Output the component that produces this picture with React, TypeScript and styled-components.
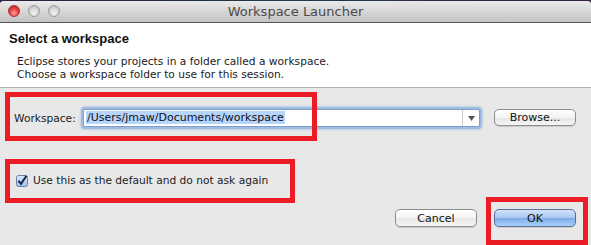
import React from "react";
import styled, { createGlobalStyle } from "styled-components";

const GlobalStyle = createGlobalStyle`
  html, body {
    margin: 0;
    padding: 0;
    background: #1d1b2e;
    overflow: hidden;
  }
  body {
    font-family: "DejaVu Sans", "Liberation Sans", sans-serif;
  }
`;

const Desktop = styled.div`
  width: 591px;
  height: 245px;
  padding-top: 1px;
  box-sizing: border-box;
  background: linear-gradient(90deg, #2a2140 0%, #1f3a48 50%, #352048 100%);
`;

const Window = styled.div`
  position: relative;
  width: 591px;
  height: 244px;
  display: flex;
  flex-direction: column;
  background: #e8e8e8;
  border-radius: 4px 4px 0 0;
  overflow: hidden;
`;

const TitleBar = styled.div`
  position: relative;
  height: 21px;
  display: flex;
  align-items: center;
  justify-content: center;
  background: linear-gradient(#eaeaea, #d2d2d2 60%, #c4c4c4);
  border-bottom: 1px solid #555;
  font-size: 13px;
  color: #4a4a4a;
`;

const Lights = styled.div`
  position: absolute;
  left: 8px;
  top: 4px;
  display: flex;
  gap: 8px;
`;

const Light = styled.span<{ $red?: boolean }>`
  width: 12px;
  height: 12px;
  border-radius: 50%;
  box-sizing: border-box;
  border: 1px solid ${(p) => (p.$red ? "#a8303a" : "#9a9a9a")};
  background: ${(p) =>
    p.$red
      ? "radial-gradient(circle at 50% 70%, #ff9a9a, #e33a3a 55%, #b0242c)"
      : "radial-gradient(circle at 50% 70%, #f4f4f4, #d4d4d4 55%, #bdbdbd)"};
`;

const Header = styled.div`
  background: #fff;
  height: 65px;
  box-sizing: border-box;
  padding: 8px 0 0 9px;
  border-bottom: 1px solid #b0b0b0;
`;

const Heading = styled.div`
  font-family: "Liberation Sans", Arial, sans-serif;
  font-weight: bold;
  font-size: 13px;
  line-height: 16px;
  color: #111;
`;

const Description = styled.div`
  margin: 8px 0 0 8px;
  font-size: 10.65px;
  line-height: 13px;
  color: #1a1a1a;
`;

const Body = styled.div`
  flex: 1;
  display: flex;
  flex-direction: column;
  padding: 21px 15px 0 14px;
`;

const Row = styled.div`
  display: flex;
  align-items: center;
`;

const Label = styled.span`
  font-size: 10.65px;
  color: #1a1a1a;
  width: 69px;
`;

const Combo = styled.div`
  width: 397px;
  height: 18px;
  box-sizing: border-box;
  display: flex;
  align-items: center;
  background: #fff;
  border: 1px solid #7f9fc8;
  border-radius: 2px;
  box-shadow: 0 0 0 2px #9dbde4, 0 0 2px 3px rgba(120, 160, 215, 0.35);
`;

const ComboText = styled.span`
  flex: 1;
  padding-left: 2px;
  font-size: 11px;
  line-height: 14px;
  color: #111;
`;

const Selected = styled.span`
  background: #b5d5fd;
  padding: 0 1px;
`;

const ComboArrow = styled.div`
  width: 16px;
  height: 100%;
  border-left: 1px solid #c8c8c8;
  display: flex;
  align-items: center;
  justify-content: center;
`;

const Button = styled.button<{ $primary?: boolean }>`
  width: 82px;
  height: 18px;
  padding: 0;
  border-radius: 5px;
  font-family: inherit;
  font-size: 11px;
  color: #111;
  border: 1px solid ${(p) => (p.$primary ? "#5a6e9c" : "#8d8d8d")};
  background: ${(p) =>
    p.$primary
      ? "linear-gradient(#d2e3fa, #a9c8f0 48%, #7fabe6 52%, #a8d0f8)"
      : "linear-gradient(#ffffff, #f3f3f3 50%, #e6e6e6 52%, #f6f6f6)"};
  box-shadow: 0 1px 1px rgba(0, 0, 0, 0.12);
`;

const BrowseButton = styled(Button)`
  margin-left: 14px;
  height: 17px;
  margin-top: -2px;
`;

const CheckRow = styled(Row)`
  margin-top: 47px;
  padding-left: 2px;
  gap: 5px;
  font-size: 10.65px;
  color: #1a1a1a;
`;

const Footer = styled.div`
  display: flex;
  justify-content: flex-end;
  gap: 17px;
  margin-top: 22px;
`;

const Annotation = styled.div<{ $x: number; $y: number; $w: number; $h: number }>`
  position: absolute;
  left: ${(p) => p.$x}px;
  top: ${(p) => p.$y}px;
  width: ${(p) => p.$w}px;
  height: ${(p) => p.$h}px;
  box-sizing: border-box;
  border: 5px solid #ec1c24;
  pointer-events: none;
`;

const Checkbox = () => (
  <svg width="12" height="12" viewBox="0 0 12 12">
    <defs>
      <linearGradient id="cb" x1="0" y1="0" x2="0" y2="1">
        <stop offset="0" stopColor="#d9e7fb" />
        <stop offset="1" stopColor="#9fbfea" />
      </linearGradient>
    </defs>
    <rect x="0.5" y="0.5" width="11" height="11" rx="2" fill="url(#cb)" stroke="#6b7fa6" />
    <path d="M2.5 5.8 L5 8.8 L10.5 0.8" fill="none" stroke="#16254a" strokeWidth="2" />
  </svg>
);

export default function App() {
  return (
    <>
      <GlobalStyle />
      <Desktop>
        <Window>
          <TitleBar>
            <Lights>
              <Light $red />
              <Light />
              <Light />
            </Lights>
            Workspace Launcher
          </TitleBar>
          <Header>
            <Heading>Select a workspace</Heading>
            <Description>
              Eclipse stores your projects in a folder called a workspace.
              <br />
              Choose a workspace folder to use for this session.
            </Description>
          </Header>
          <Body>
            <Row>
              <Label>Workspace:</Label>
              <Combo>
                <ComboText>
                  <Selected>/Users/jmaw/Documents/workspace</Selected>
                </ComboText>
                <ComboArrow>
                  <svg width="7" height="5" viewBox="0 0 7 5">
                    <path d="M0 0 H7 L3.5 5 Z" fill="#555" />
                  </svg>
                </ComboArrow>
              </Combo>
              <BrowseButton>Browse...</BrowseButton>
            </Row>
            <CheckRow>
              <Checkbox />
              Use this as the default and do not ask again
            </CheckRow>
            <Footer>
              <Button>Cancel</Button>
              <Button $primary>OK</Button>
            </Footer>
          </Body>
          <Annotation $x={5} $y={91} $w={312} $h={49} />
          <Annotation $x={5} $y={158} $w={290} $h={44} />
          <Annotation $x={486} $y={196} $w={102} $h={48} />
        </Window>
      </Desktop>
    </>
  );
}
